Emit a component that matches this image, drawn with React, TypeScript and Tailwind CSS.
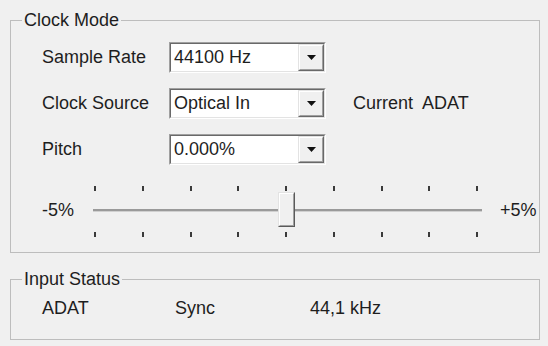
import React from "react";

const font = { fontFamily: '"Liberation Sans", Arial, sans-serif' };

function Combo({ value }: { value: string }) {
  return (
    <div className="w-[157px] h-[31px] border border-t-[#a0a0a0] border-l-[#a0a0a0] border-b-[#ffffff] border-r-[#ffffff]">
      <div className="w-full h-full border border-t-[#696969] border-l-[#696969] border-b-[#e3e3e3] border-r-[#e3e3e3] flex bg-white">
        <div className="flex-1 flex items-center pl-[3px] text-[18px] leading-[21px] text-[#1e1e1e]">{value}</div>
        <div className="w-[26px] h-full border border-t-[#e3e3e3] border-l-[#e3e3e3] border-b-[#696969] border-r-[#696969]">
          <div className="w-full h-full border border-t-white border-l-white border-b-[#a0a0a0] border-r-[#a0a0a0] bg-[#f0f0f0] flex items-center justify-center">
            <svg width="9" height="5" viewBox="0 0 9 5">
              <path d="M0 0 H9 L4.5 5 Z" fill="#111" />
            </svg>
          </div>
        </div>
      </div>
    </div>
  );
}

function Ticks() {
  return (
    <div className="ml-[1px] w-[384px] h-[5px] flex justify-between">
      {Array.from({ length: 9 }).map((_, i) => (
        <div key={i} className="w-[2px] h-full bg-[#3a3a3a]" />
      ))}
    </div>
  );
}

export default function App() {
  return (
    <div
      className="w-[548px] h-[346px] bg-[#f0f0f0] pl-[10px] pt-[10px] text-[#1e1e1e] overflow-hidden"
      style={font}
    >
      <fieldset className="w-[530px] border border-[#bdbdbd] p-0 m-0">
        <legend className="ml-[11px] px-[2px] text-[18px] leading-[21px]">Clock Mode</legend>
        <div className="pl-[31px] pt-[11px] pb-[13px]">
          <div className="flex flex-col gap-[15px]">
            <div className="h-[31px] flex items-center">
              <div className="w-[127px] text-[18px] leading-[21px]">Sample Rate</div>
              <Combo value="44100 Hz" />
            </div>
            <div className="h-[31px] flex items-center">
              <div className="w-[127px] text-[18px] leading-[21px]">Clock Source</div>
              <Combo value="Optical In" />
              <div className="ml-[27px] text-[18px] leading-[21px]">Current&nbsp; ADAT</div>
            </div>
            <div className="h-[31px] flex items-center">
              <div className="w-[127px] text-[18px] leading-[21px]">Pitch</div>
              <Combo value="0.000%" />
            </div>
          </div>
          <div className="mt-[18px] h-[56px] flex items-center">
            <div className="w-[51px] text-[18px] leading-[21px] mb-[2px]">-5%</div>
            <div className="relative w-[389px] h-full flex flex-col">
              <div className="mt-[3px]">
                <Ticks />
              </div>
              <div className="h-[18px]" />
              <div className="h-[3px] bg-[#9a9a9a] border-b border-b-[#d0d0d0]" />
              <div className="h-[20px]" />
              <Ticks />
              <div className="absolute left-[185px] top-[9px] w-[17px] h-[35px] border border-t-[#e3e3e3] border-l-[#e3e3e3] border-b-[#5a5a5a] border-r-[#5a5a5a]">
                <div className="w-full h-full border border-t-white border-l-white border-b-[#a0a0a0] border-r-[#a0a0a0] bg-[#f0f0f0]" />
              </div>
            </div>
            <div className="ml-[18px] text-[18px] leading-[21px] mb-[2px]">+5%</div>
          </div>
        </div>
      </fieldset>

      <fieldset className="mt-[16px] w-[530px] border border-[#bdbdbd] p-0 m-0">
        <legend className="ml-[11px] px-[2px] text-[18px] leading-[21px]">Input Status</legend>
        <div className="pl-[31px] pt-[8px] pb-[20px] flex text-[18px] leading-[21px]">
          <div className="w-[133px]">ADAT</div>
          <div className="w-[135px]">Sync</div>
          <div>44,1 kHz</div>
        </div>
      </fieldset>
    </div>
  );
}
